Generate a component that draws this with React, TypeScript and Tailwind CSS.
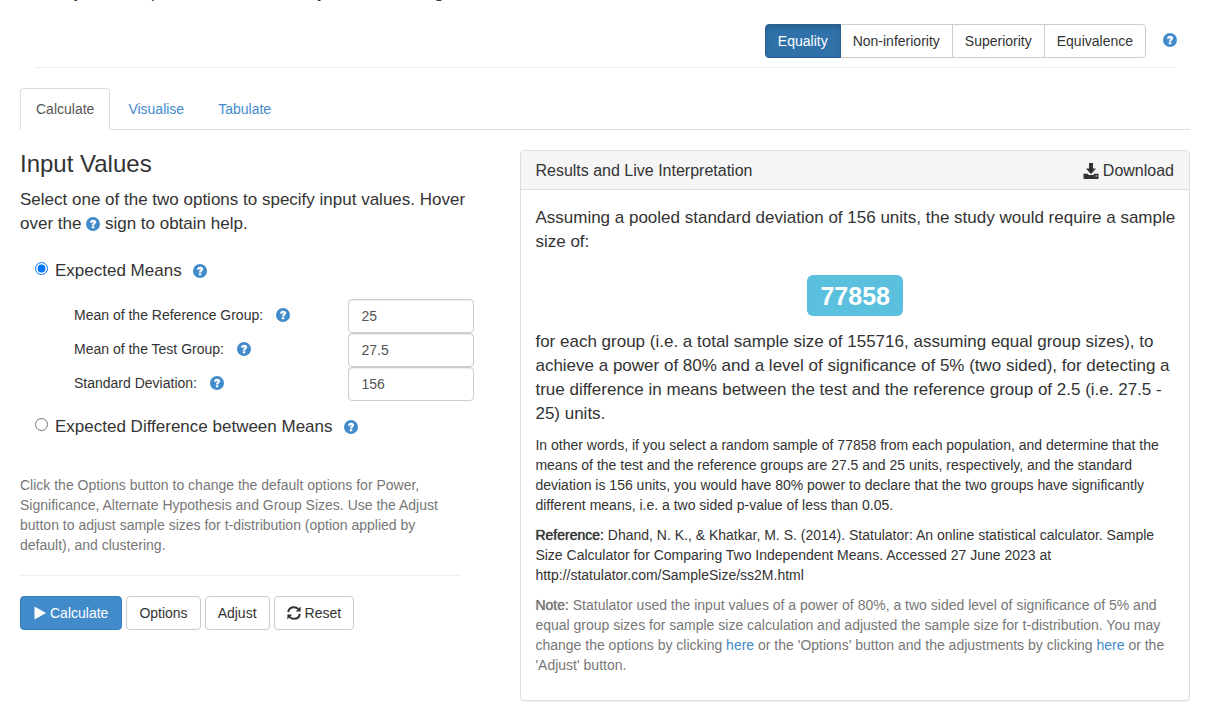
import React, { useState } from "react";

function HelpIcon({ className = "" }: { className?: string }) {
  return (
    <svg viewBox="0 0 14 14" className={`inline-block size-[14px] shrink-0 ${className}`} aria-hidden="true">
      <circle cx="7" cy="7" r="7" fill="#428bca" />
      <path
        d="M4 5.7C4 3.7 5.2 2.7 7.1 2.7C9 2.7 10.2 3.6 10.2 5.1C10.2 6.8 8.3 7 8.3 8.5H5.8C5.8 6.6 7.6 6.3 7.6 5.4C7.6 5 7.4 4.8 7.1 4.8C6.7 4.8 6.5 5.1 6.5 5.7ZM5.8 9.2H8.3V11.3H5.8Z"
        fill="#fff"
      />
    </svg>
  );
}

function DownloadIcon() {
  return (
    <svg viewBox="0 0 16 16" className="size-4" fill="#333" aria-hidden="true">
      <path d="M6 0h4v5.5h3L8.4 10.8h-0.8L3 5.5h3zM0.5 10.7h4.2l1.1 1.2h4.4l1.1-1.2h4.2V16h-15zM12.5 12.6v1h1.6v-1z" />
    </svg>
  );
}

function RefreshIcon() {
  return (
    <svg viewBox="0 0 14 14" className="size-[14px]" fill="none" stroke="#333" strokeWidth="2" aria-hidden="true">
      <path d="M1.2 6.2C1.6 3.2 4 1.2 7 1.2C8.8 1.2 10.3 1.9 11.4 3.1" />
      <path d="M12.8 7.8C12.4 10.8 10 12.8 7 12.8C5.2 12.8 3.7 12.1 2.6 10.9" />
      <path d="M13.6 0.6V5.4H8.8ZM0.4 13.4V8.6H5.2Z" fill="#333" stroke="none" />
    </svg>
  );
}

const tests = ["Equality", "Non-inferiority", "Superiority", "Equivalence"];
const tabs = ["Calculate", "Visualise", "Tabulate"];
const fields = [
  { id: "reference-mean", label: "Mean of the Reference Group:", value: "25" },
  { id: "test-mean", label: "Mean of the Test Group:", value: "27.5" },
  { id: "deviation", label: "Standard Deviation:", value: "156" },
];

const plainButton = "h-[34px] rounded border border-[#ccc] bg-white px-3";
const softBold = "font-normal [text-shadow:0_0_1px_currentColor]";

export default function App() {
  const [test, setTest] = useState("Equality");
  const [tab, setTab] = useState("Calculate");
  const [mode, setMode] = useState("means");

  return (
    <div className="overflow-hidden bg-white pr-[17px] pb-3 pl-5 font-['Liberation_Sans',Arial,sans-serif] text-sm leading-5 text-[#333]">
      <header className="px-[15px]">
        <p className="-mt-[19px] text-[17px] leading-6">Briefly, the sample size for either study of similar design</p>
        <div className="mt-[19px] border-b border-[#eee] pb-[9px]">
          <div className="-mr-0.5 flex items-start justify-end">
            <div className="flex" role="group" aria-label="Hypothesis">
              {tests.map((name) => (
                <button
                  key={name}
                  type="button"
                  aria-pressed={test === name}
                  onClick={() => setTest(name)}
                  className={`-ml-px h-[34px] border px-3 first:rounded-l last:rounded-r ${
                    test === name
                      ? "relative border-[#285e8e] bg-[#3071a9] text-white shadow-[inset_0_3px_5px_rgba(0,0,0,0.125)]"
                      : "border-[#ccc] bg-white"
                  }`}
                >
                  {name}
                </button>
              ))}
            </div>
            <HelpIcon className="mt-[9px] ml-[17px]" />
          </div>
        </div>
      </header>

      <nav className="mt-5 flex gap-0.5 border-b border-[#ddd]" role="tablist">
        {tabs.map((name) => (
          <button
            key={name}
            type="button"
            role="tab"
            aria-selected={tab === name}
            onClick={() => setTab(name)}
            className={`-mb-px h-[42px] rounded-t border px-[15px] ${
              tab === name ? "border-[#ddd] border-b-white bg-white text-[#555]" : "border-transparent text-[#428bca]"
            }`}
          >
            {name}
          </button>
        ))}
      </nav>

      <main className="mt-5 grid grid-cols-[3fr_4fr] items-start">
        <section className="pr-[61px]">
          <h1 className="text-2xl leading-7">Input Values</h1>
          <p className="mt-[10px] -mr-2 text-[17px] leading-6">
            Select one of the two options to specify input values. Hover over the{" "}
            <HelpIcon className="align-[-2px]" /> sign to obtain help.
          </p>

          <div className="mt-[23px] ml-[15px] flex items-start">
            <input id="by-means" type="radio" name="mode" checked={mode === "means"} onChange={() => setMode("means")} className="mt-[3px] size-[13px]" />
            <label htmlFor="by-means" className="ml-[7px] text-[17px] leading-6">Expected Means</label>
            <HelpIcon className="mt-[5px] ml-[11px]" />
          </div>

          <div className="-mr-[14px] mt-4 ml-[54px]">
            {fields.map((f) => (
              <div key={f.id} className="flex items-start">
                <label htmlFor={f.id} className="pt-[6px]">{f.label}</label>
                <HelpIcon className="mt-[9px] ml-[13px]" />
                <input
                  id={f.id}
                  type="text"
                  defaultValue={f.value}
                  className="ml-auto h-[34px] w-[126px] rounded border border-[#ccc] px-3 text-[#555] shadow-[inset_0_1px_1px_rgba(0,0,0,0.075)]"
                />
              </div>
            ))}
          </div>

          <div className="mt-[14px] ml-[15px] flex items-start">
            <input id="by-difference" type="radio" name="mode" checked={mode === "difference"} onChange={() => setMode("difference")} className="mt-[3px] size-[13px]" />
            <label htmlFor="by-difference" className="ml-[7px] text-[17px] leading-6">Expected Difference between Means</label>
            <HelpIcon className="mt-[5px] ml-[11px]" />
          </div>

          <p className="mt-9 text-[#777]">
            Click the Options button to change the default options for Power, Significance, Alternate Hypothesis and
            Group Sizes. Use the Adjust button to adjust sample sizes for t-distribution (option applied by default), and
            clustering.
          </p>
          <hr className="mt-5 border-[#eee]" />
          <div className="mt-5 flex gap-1">
            <button type="button" className="flex h-[34px] items-center gap-1 rounded border border-[#357ebd] bg-[#428bca] px-[13px] text-white">
              <svg viewBox="0 0 12 14" className="h-[14px] w-3" fill="#fff" aria-hidden="true">
                <path d="M0.5 0.5v13L12 7z" />
              </svg>
              Calculate
            </button>
            <button type="button" className={plainButton}>Options</button>
            <button type="button" className={plainButton}>Adjust</button>
            <button type="button" className={`${plainButton} flex items-center gap-1`}>
              <RefreshIcon />
              Reset
            </button>
          </div>
        </section>

        <section className="-ml-px rounded border border-[#ddd] shadow-[0_1px_1px_rgba(0,0,0,0.05)]">
          <div className="flex h-[39px] items-center justify-between rounded-t border-b border-[#ddd] bg-[#f5f5f5] pr-[15px] pl-[14px] text-base">
            <h2 className="pt-px">Results and Live Interpretation</h2>
            <button type="button" className="flex items-center gap-1 pt-px">
              <DownloadIcon />
              Download
            </button>
          </div>
          <div className="px-[14px] pt-4 pb-[25px]">
            <p className="-mr-2 text-[17px] leading-6">
              Assuming a pooled standard deviation of 156 units, the study would require a sample size of:
            </p>
            <div className="mt-[21px] flex justify-center">
              <strong className="flex h-[41px] items-center rounded-md bg-[#5bc0de] px-[13px] text-[25px] text-white">77858</strong>
            </div>
            <p className="mt-[14px] -mr-2 text-[17px] leading-6">
              for each group (i.e. a total sample size of 155716, assuming equal group sizes), to achieve a power of 80%
              and a level of significance of 5% (two sided), for detecting a true difference in means between the test and
              the reference group of 2.5 (i.e. 27.5 - 25) units.
            </p>
            <p className="mt-[9px]">
              In other words, if you select a random sample of 77858 from each population, and determine that the means of
              the test and the reference groups are 27.5 and 25 units, respectively, and the standard deviation is 156
              units, you would have 80% power to declare that the two groups have significantly different means, i.e. a
              two sided p-value of less than 0.05.
            </p>
            <p className="mt-[10px]">
              <b className={softBold}>Reference:</b> Dhand, N. K., &amp; Khatkar, M. S. (2014). Statulator: An online
              statistical calculator. Sample Size Calculator for Comparing Two Independent Means. Accessed 27 June 2023 at
              http://statulator.com/SampleSize/ss2M.html
            </p>
            <p className="mt-[10px] text-[#777]">
              <b className={softBold}>Note:</b> Statulator used the input values of a power of 80%, a two sided level of
              significance of 5% and equal group sizes for sample size calculation and adjusted the sample size for
              t-distribution. You may change the options by clicking{" "}
              <a href="#options" className="text-[#428bca]">here</a> or the 'Options' button and the adjustments by
              clicking <a href="#adjust" className="text-[#428bca]">here</a> or the 'Adjust' button.
            </p>
          </div>
        </section>
      </main>
    </div>
  );
}
